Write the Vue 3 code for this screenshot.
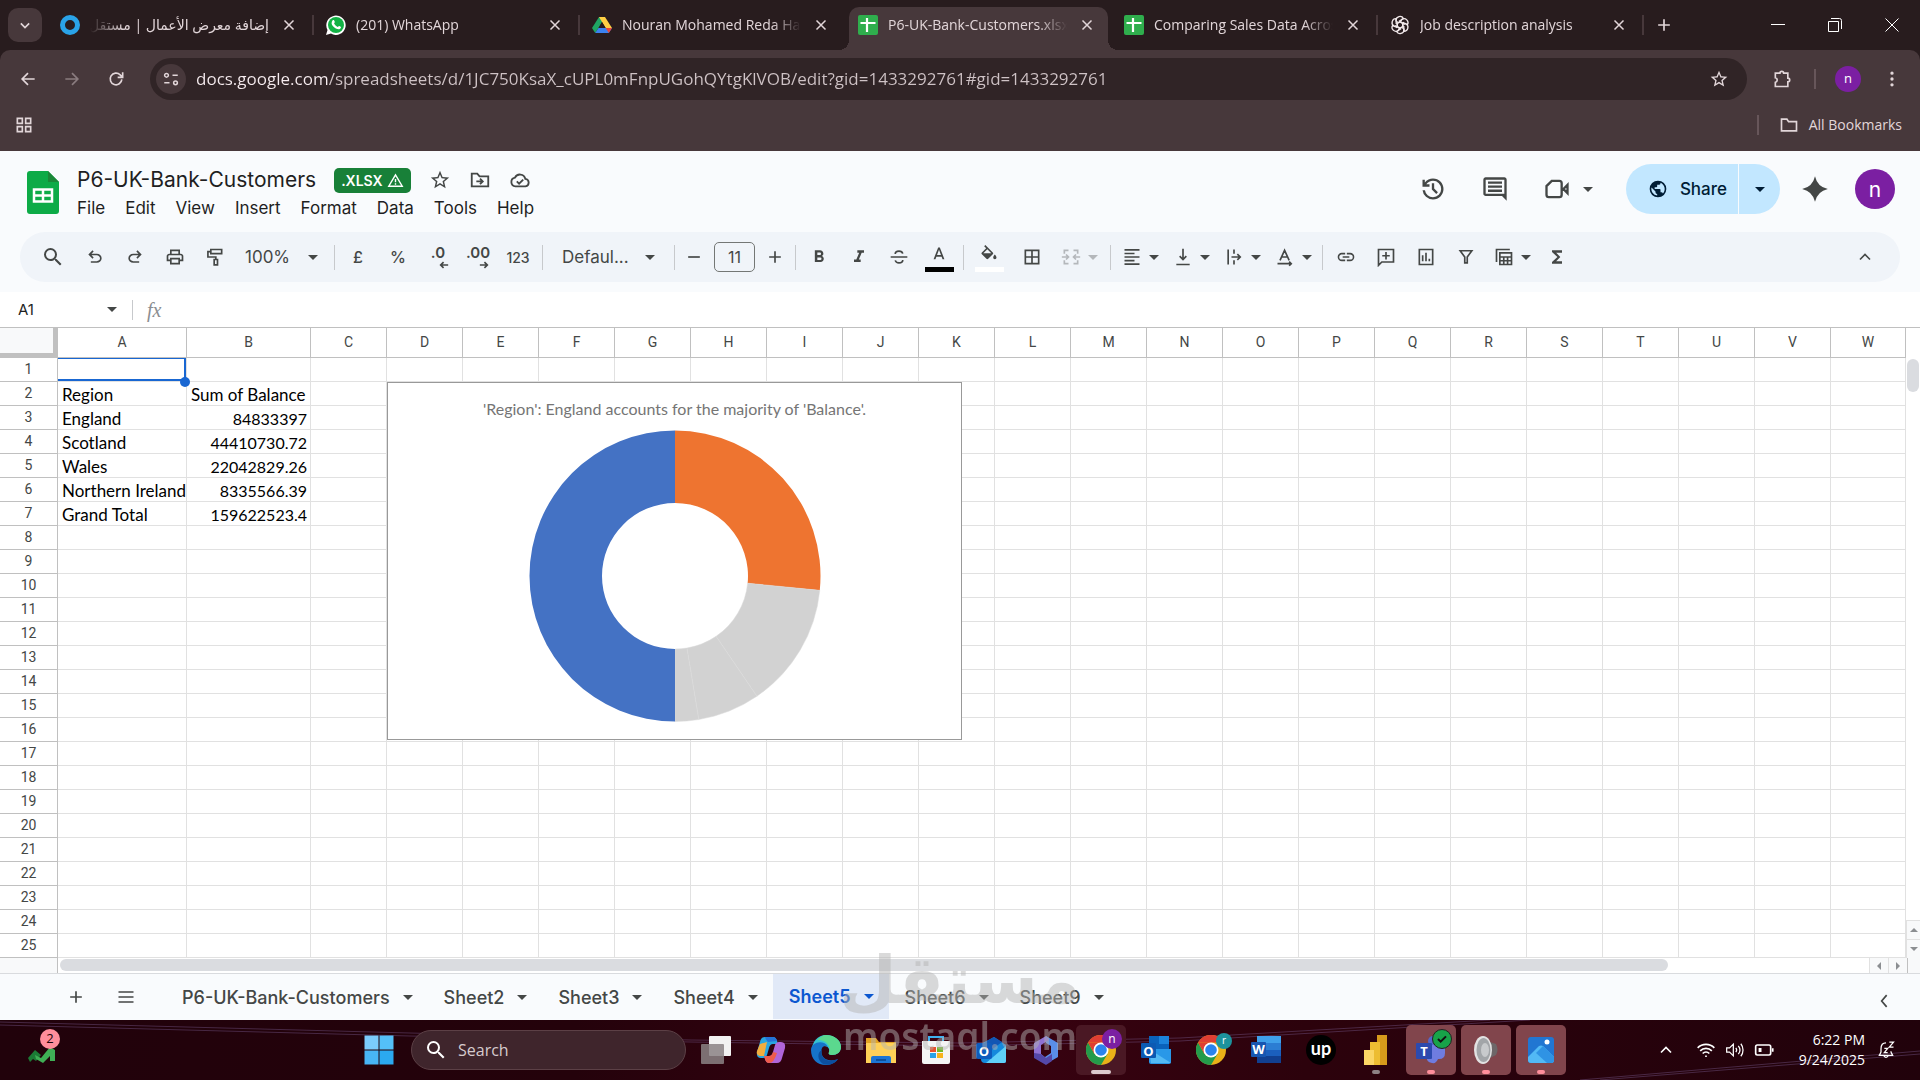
<script setup>
import { ref, computed, h } from 'vue'

// 24x24 icons: f = filled path, s = stroked path
const ICONS = {
  chevronDown: { s: 'M7 10l5 5 5-5' },
  chevronUp: { s: 'M6 15l6-6 6 6' },
  chevronLeft: { s: 'M14 5l-6 7 6 7' },
  close: { s: 'M6 6l12 12M18 6L6 18' },
  plus: { s: 'M12 5v14M5 12h14' },
  minus: { s: 'M5 12h14' },
  back: { s: 'M20 12H5M12 5l-7 7 7 7' },
  forward: { s: 'M4 12h15M12 5l7 7-7 7' },
  reload: { s: 'M19 12.500a7 7 0 1 1-2-5.500l2.500 2.500M20 4v6h-6' },
  tune: { s: 'M14 7h7M3 17h7M6 4.500a2.500 2.500 0 1 0 0 5a2.500 2.500 0 1 0 0-5M18 14.500a2.500 2.500 0 1 0 0 5a2.500 2.500 0 1 0 0-5' },
  star: { f: 'M22 9.240l-7.190-.62L12 2 9.190 8.630 2 9.240l5.460 4.730L5.820 21 12 17.270 18.180 21l-1.630-7.030zM12 15.400l-3.760 2.270 1-4.280-3.320-2.880 4.380-.38L12 6.100l1.710 4.040 4.380.38-3.320 2.880 1 4.280z' },
  extension: { s: 'M4 5h5.500a2 2 0 1 1 4.500 0h5v6a2 2 0 1 1 0 4.500V21H4v-5a2.800 2.800 0 0 0 0-5.500z' },
  dots: { f: 'M12 3a2 2 0 1 1 0 4 2 2 0 0 1 0-4zm0 7a2 2 0 1 1 0 4 2 2 0 0 1 0-4zm0 7a2 2 0 1 1 0 4 2 2 0 0 1 0-4z' },
  apps: { s: 'M4 4h6v6H4zM14 4h6v6h-6zM4 14h6v6H4zM14 14h6v6h-6z' },
  folder: { s: 'M3 5h6.500l2 3H21v11H3z' },
  folderMove: { s: 'M3 8V5h6l2.500 3H21v11H3zM8 13.500h7M12 10.500l3 3-3 3' },
  cloudDone: { s: 'M7 19a4.800 4.800 0 0 1-.5-9.500 6 6 0 0 1 11.300 1.200A4.200 4.200 0 0 1 18 19zM8.500 13.500l2.500 2.500 4.500-4.500' },
  warning: { s: 'M12 4L2.500 20h19zM12 10v4.500M12 16v2' },
  history: { f: 'M12 21q-3.450 0-6.010-2.290T3.050 13H5.100q.35 2.600 2.310 4.300T12 19q2.930 0 4.960-2.040T19 12t-2.040-4.960T12 5q-1.730 0-3.220.8T6.250 8H9v2H3V4h2v2.350q1.280-1.600 3.110-2.480T12 3q1.880 0 3.510.71t2.860 1.930 1.930 2.850T21 12t-.7 3.510-1.930 2.850-2.860 1.930T12 21zm2.800-4.800L11 12.400V7h2v4.600l3.200 3.200z' },
  chat: { f: 'M22 22l-4-4H4q-.83 0-1.410-.59T2 16V4q0-.83.59-1.410T4 2h16q.83 0 1.410.59T22 4zM4 4v12h16V4zm2 1.500h12v2H6zm0 3.500h12v2H6zm0 3.500h12v2H6z' },
  meet: { s: 'M7.500 5H14a2 2 0 0 1 2 2v10a2 2 0 0 1-2 2H5a2 2 0 0 1-2-2V9.500zM17.500 12l3.500-3.500v7z' },
  globe: { f: 'M12 2a10 10 0 1 0 0 20 10 10 0 0 0 0-20zm-1 17.930A8 8 0 0 1 4.210 10.210L9 15v1a2 2 0 0 0 2 2zm6.900-2.540A2 2 0 0 0 16 16h-1v-3a1 1 0 0 0-1-1H8v-2h2a1 1 0 0 0 1-1V7h2a2 2 0 0 0 2-2v-.41a8 8 0 0 1 2.900 12.800z' },
  spark: { f: 'M12 1Q14 10 23 12Q14 14 12 23Q10 14 1 12Q10 10 12 1z' },
  search: { f: 'M15.500 14h-.79l-.28-.27A6.470 6.470 0 0 0 16 9.500 6.500 6.500 0 1 0 9.500 16c1.610 0 3.090-.59 4.230-1.570l.27.28v.79l5 4.990L20.490 19zm-6 0a4.500 4.500 0 1 1 0-9 4.500 4.500 0 0 1 0 9z' },
  undo: { f: 'M7 19v-2h7.100q1.575 0 2.738-1T18 13.500 16.838 11 14.100 10H7.800l2.600 2.600L9 14 4 9l5-5 1.400 1.400L7.800 8h6.300q2.425 0 4.163 1.575T20 13.500t-1.737 3.925T14.100 19z' },
  print: { f: 'M19 8h-1V3H6v5H5c-1.660 0-3 1.340-3 3v6h4v4h12v-4h4v-6c0-1.660-1.340-3-3-3zM8 5h8v3H8zm8 14H8v-4h8zm2-4v-2H6v2H4v-4c0-.55.45-1 1-1h14c.55 0 1 .45 1 1v4z' },
  paint: { s: 'M7 3h13v5H7zM7 5.500H3.500V12H13v3M11 15h4v6.500h-4z' },
  bold: { f: 'M15.600 10.790c.97-.67 1.650-1.770 1.650-2.790 0-2.260-1.750-4-4-4H7v14h7.040c2.090 0 3.710-1.700 3.710-3.790 0-1.520-.86-2.820-2.150-3.420zM10 6.500h3a1.500 1.500 0 0 1 0 3h-3zm3.500 9H10v-3h3.500a1.500 1.500 0 0 1 0 3z' },
  italic: { f: 'M10 4v3h2.210l-3.420 8H6v3h8v-3h-2.210l3.420-8H18V4z' },
  strike: { s: 'M2 12h20M16.500 8c-.5-2-2.200-3-4.500-3-2.800 0-4.500 1.400-4.500 3.500M7.500 16c.5 2 2.200 3 4.500 3 2.800 0 4.500-1.400 4.500-3.500' },
  textA: { f: 'M11 3L5.500 17h2.250l1.120-3h6.250l1.120 3h2.250L13 3zm-1.380 9L12 5.670 14.380 12z' },
  bucket: { f: 'M16.560 8.940L7.620 0 6.210 1.410l2.380 2.380-5.150 5.150a1.490 1.490 0 0 0 0 2.120l5.500 5.500a1.490 1.490 0 0 0 2.120 0l5.500-5.500a1.500 1.500 0 0 0 0-2.120zM5.210 10L10 5.210 14.790 10zM19 11.500s-2 2.170-2 3.500a2 2 0 1 0 4 0c0-1.330-2-3.500-2-3.500z' },
  borders: { s: 'M4 4h16v16H4zM12 4v16M4 12h16' },
  merge: { s: 'M4 8V4h5M15 4h5v4M20 16v4h-5M9 20H4v-4M1 12h8M6 9l3 3-3 3M23 12h-8M18 9l-3 3 3 3' },
  align: { f: 'M3 2.500h18v2H3zm0 4.250h12v2H3zM3 11h18v2H3zm0 4.250h12v2H3zM3 19.500h18v2H3z' },
  valign: { s: 'M12 2v13M8 11l4 4 4-4M4 21h16' },
  wrap: { s: 'M5 3v18M12 3v5M12 16v5M9 12h10M16 8.500l3.500 3.500-3.500 3.500' },
  rotate: { s: 'M6 16L11.500 4 17 16M8 12h7M3 20h16M17 17.500l2.500 2.500-2.500 2.500' },
  link: { f: 'M3.900 12c0-1.710 1.390-3.100 3.100-3.100h4V7H7a5 5 0 0 0 0 10h4v-1.900H7A3.100 3.100 0 0 1 3.900 12zM8 13h8v-2H8zm9-6h-4v1.900h4a3.100 3.100 0 0 1 0 6.200h-4V17h4a5 5 0 0 0 0-10z' },
  addComment: { s: 'M3 22V3h18v15H7zM12 6v9M7.500 10.500h9' },
  chart: { s: 'M4 3h16v18H4zM8 10v7M12 7v10M16 14v3' },
  filter: { s: 'M5 4.500h14l-5.500 7.500v7h-3v-7z' },
  tableView: { s: 'M3 18V3h16M7 7h14v14H7zM7 12h14M7 16.500h14M11.700 12v9M16.300 12v9' },
  sigma: { f: 'M18 4H6v2l6.500 6L6 18v2h12v-3h-7l5-5-5-5h7z' },
  menu: { s: 'M3 6h18M3 12h18M3 18h18' },
  arrowL: { s: 'M22 12H4M11 5l-7 7 7 7', w: 4 },
  arrowR: { s: 'M2 12h18M13 5l7 7-7 7', w: 4 },
  wifi: { s: 'M2 9.500a14 14 0 0 1 20 0M5 13a10 10 0 0 1 14 0M8 16.200a5.700 5.700 0 0 1 8 0M11 19.500h2' },
  sound: { s: 'M2 9.500h3.500L10 5v14l-4.500-4.500H2zM13 9.500a4 4 0 0 1 0 5M16 7a8 8 0 0 1 0 10M19 4.500a12 12 0 0 1 0 15', w: 1.5 },
  battery: { s: 'M4 6h14q2 0 2 2v8q0 2-2 2H4q-2 0-2-2V8q0-2 2-2zM22.500 10v4M8 9.500v5M6.500 9.500v5' },
  bell: { s: 'M12 3.500q-6 0-6 7v4l-2 4h16l-2-4v-1M9.500 19q2.500 3.500 5 0M16 2.500h5l-5 6h5M10 10h4l-4 5h4', w: 1.5 }
}

const Ico = ({ n }) => {
  const { f, s, w = 2 } = ICONS[n]
  return h('svg', { class: 'ico', viewBox: '0 0 24 24', 'aria-hidden': 'true' }, [
    h('path', f
      ? { d: f, fill: 'currentColor', 'fill-rule': 'evenodd' }
      : { d: s, fill: 'none', stroke: 'currentColor', 'stroke-width': w })
  ])
}
Ico.props = ['n']

const browserTabs = [
  { title: 'إضافة معرض الأعمال | مستقل', icon: 'ring', rtl: true },
  { title: '(201) WhatsApp', icon: 'whatsapp' },
  { title: 'Nouran Mohamed Reda Hassan', icon: 'drive' },
  { title: 'P6-UK-Bank-Customers.xlsx', icon: 'sheet', active: true },
  { title: 'Comparing Sales Data Across', icon: 'sheet' },
  { title: 'Job description analysis', icon: 'gpt' }
]
const url = ref('docs.google.com/spreadsheets/d/1JC750KsaX_cUPL0mFnpUGohQYtgKlVOB/edit?gid=1433292761#gid=1433292761')
const menus = ['File', 'Edit', 'View', 'Insert', 'Format', 'Data', 'Tools', 'Help']

const columns = 'ABCDEFGHIJKLMNOPQRSTUVW'.split('')
const ROWS = 25
const cells = {
  2: ['Region', 'Sum of Balance'],
  3: ['England', '84833397'],
  4: ['Scotland', '44410730.72'],
  5: ['Wales', '22042829.26'],
  6: ['Northern Ireland', '8335566.39'],
  7: ['Grand Total', '159622523.4']
}
const isNumber = v => v !== undefined && !isNaN(v)

const sheets = ['P6-UK-Bank-Customers', 'Sheet2', 'Sheet3', 'Sheet4', 'Sheet5', 'Sheet6', 'Sheet9']
const activeSheet = ref('Sheet5')

// the pivot's grand total is part of the plotted range
const COLORS = ['#ee7430', '#d2d2d2', '#d2d2d2', '#d2d2d2', '#4472c4']
const R = 145.5
const r = 73
const slices = computed(() => {
  const values = [3, 4, 5, 6, 7].map(row => Number(cells[row][1]))
  const total = values.reduce((s, v) => s + v, 0)
  let a = 0
  return values.map((v, i) => {
    const b = a + (v / total) * Math.PI * 2
    const p = (rad, t) => `${(rad * Math.sin(t)).toFixed(2)} ${(-rad * Math.cos(t)).toFixed(2)}`
    const big = b - a > Math.PI ? 1 : 0
    const d = `M${p(R, a)}A${R} ${R} 0 ${big} 1 ${p(R, b)}L${p(r, b)}A${r} ${r} 0 ${big} 0 ${p(r, a)}Z`
    a = b
    return { d, color: COLORS[i] }
  })
})
</script>

<template>
  <div class="app">
    <header class="chrome">
      <div class="tabstrip">
        <button class="tab-search" aria-label="Search tabs"><Ico n="chevronDown" /></button>
        <div v-for="t in browserTabs" :key="t.title" class="tab" :class="{ active: t.active }">
          <svg v-if="t.icon === 'ring'" class="fav" viewBox="0 0 20 20"><circle cx="10" cy="10" r="7.500" fill="none" stroke="#2aa3e8" stroke-width="5" /></svg>
          <svg v-else-if="t.icon === 'whatsapp'" class="fav" viewBox="0 0 20 20">
            <path d="M0 20l1.500-5A9.700 9.700 0 1 1 5 18.600z" fill="#fff" />
            <circle cx="10" cy="10" r="8" fill="#12b245" />
            <path d="M6.500 5.500c1-1 1.700-.5 2.300 1.500 0 .8-.8 1-.7 1.500.8 1.500 2 2.700 3.500 3.400.6 0 1-1.200 1.700-1 1.700.8 2 1 1.500 2-1 1.600-2.700 1.600-5 .5C7.300 12 5.800 10 5.600 8.500c0-1.300.3-2.300.9-3z" fill="#fff" />
          </svg>
          <svg v-else-if="t.icon === 'drive'" class="fav" viewBox="0 0 20 20">
            <path d="M7 2h6l-6.500 11-3.300 5L0 13z" fill="#1fa463" /><path d="M7 2h6l7 11h-6.300z" fill="#ffcf44" />
            <path d="M6.500 13H20l-3.200 5H3.200z" fill="#3b82f0" /><path d="M13.700 13H20l-3.200 5z" fill="#e8453c" /><path d="M10 7l3.500 6h-7z" fill="#281c1e" />
          </svg>
          <svg v-else-if="t.icon === 'sheet'" class="fav" viewBox="0 0 20 20"><rect width="20" height="20" rx="2" fill="#2fae4d" /><path d="M9 3v14M2.500 8h15" stroke="#fff" stroke-width="2.200" /></svg>
          <svg v-else class="fav" viewBox="0 0 20 20">
            <g fill="none" stroke="#f3eaec" stroke-width="1.300">
              <path v-for="k in 6" :key="k" :transform="`rotate(${k * 60} 10 10)`" d="M10 7l3 1.700v5.300M6 6.500V5.500a4 4 0 0 1 7.500-2L9 6.200" />
            </g>
          </svg>
          <span class="tab-title" :class="{ rtl: t.rtl }">{{ t.title }}</span>
          <button class="tab-close" aria-label="Close tab"><Ico n="close" /></button>
        </div>
        <button class="new-tab" aria-label="New tab"><Ico n="plus" /></button>
        <div class="win-buttons">
          <button aria-label="Minimize"><svg viewBox="0 0 14 14"><path d="M0 6.500h14" /></svg></button>
          <button aria-label="Restore"><svg viewBox="0 0 14 14"><path d="M.5 3.500h10v10H.5zM3 .5h8.500a2 2 0 0 1 2 2V11" /></svg></button>
          <button aria-label="Close"><svg viewBox="0 0 14 14"><path d="M.5.5l13 13M13.500.5l-13 13" /></svg></button>
        </div>
      </div>
      <div class="nav">
        <button aria-label="Back"><Ico n="back" /></button>
        <button class="dim" aria-label="Forward"><Ico n="forward" /></button>
        <button aria-label="Reload"><Ico n="reload" /></button>
        <div class="omnibox">
          <button class="site" aria-label="Site information"><Ico n="tune" /></button>
          <input v-model="url" aria-label="Address" spellcheck="false">
          <button class="mark" aria-label="Bookmark this tab"><Ico n="star" /></button>
        </div>
        <button aria-label="Extensions"><Ico n="extension" /></button>
        <i class="rule" />
        <button aria-label="Profile"><span class="mini-avatar">n</span></button>
        <button aria-label="Menu"><Ico n="dots" /></button>
      </div>
      <div class="bookmarks">
        <button aria-label="Apps"><Ico n="apps" /></button>
        <i class="rule" />
        <button class="all"><Ico n="folder" />All Bookmarks</button>
      </div>
    </header>

    <section class="doc-head">
      <svg class="logo" viewBox="0 0 32 43">
        <path d="M3 0h18l11 11v29a3 3 0 0 1-3 3H3a3 3 0 0 1-3-3V3a3 3 0 0 1 3-3z" fill="#0dab47" /><path d="M21 0l11 11H21z" fill="#1b8738" />
        <path d="M7 18.500h18v12H7zM16 18.500v12M7 24.500h18" fill="none" stroke="#fff" stroke-width="2.500" />
      </svg>
      <div class="doc-main">
        <div class="title-row">
          <h1>P6-UK-Bank-Customers</h1>
          <span class="xlsx">.XLSX <Ico n="warning" /></span>
          <button aria-label="Star"><Ico n="star" /></button>
          <button aria-label="Move"><Ico n="folderMove" /></button>
          <button aria-label="Document status"><Ico n="cloudDone" /></button>
        </div>
        <nav class="menus"><button v-for="m in menus" :key="m">{{ m }}</button></nav>
      </div>
      <div class="doc-actions">
        <button aria-label="Version history"><Ico n="history" /></button>
        <button aria-label="Comments"><Ico n="chat" /></button>
        <button class="meet" aria-label="Join a call"><Ico n="meet" /><i class="caret" /></button>
        <div class="share">
          <button class="share-main"><Ico n="globe" />Share</button>
          <button class="share-more" aria-label="Share options"><i class="caret" /></button>
        </div>
        <button class="spark" aria-label="Ask Gemini"><Ico n="spark" /></button>
        <button class="avatar" aria-label="Account">n</button>
      </div>
    </section>

    <div class="toolbar-wrap">
      <div class="toolbar">
        <button class="find" aria-label="Search the menus"><Ico n="search" /></button>
        <button aria-label="Undo"><Ico n="undo" /></button>
        <button class="flip" aria-label="Redo"><Ico n="undo" /></button>
        <button aria-label="Print"><Ico n="print" /></button>
        <button aria-label="Paint format"><Ico n="paint" /></button>
        <div class="pick zoom"><select aria-label="Zoom"><option>100%</option></select><i class="caret" /></div>
        <i class="sep" />
        <button class="txt">£</button>
        <button class="txt">%</button>
        <button class="txt dec">.0<Ico n="arrowL" /></button>
        <button class="txt dec">.00<Ico n="arrowR" /></button>
        <button class="txt small">123</button>
        <i class="sep" />
        <div class="pick font"><select aria-label="Font"><option>Defaul...</option></select><i class="caret" /></div>
        <i class="sep" />
        <button class="step" aria-label="Decrease font size"><Ico n="minus" /></button>
        <input class="size" value="11" aria-label="Font size">
        <button class="step" aria-label="Increase font size"><Ico n="plus" /></button>
        <i class="sep" />
        <button aria-label="Bold"><Ico n="bold" /></button>
        <button aria-label="Italic"><Ico n="italic" /></button>
        <button aria-label="Strikethrough"><Ico n="strike" /></button>
        <button class="ink" aria-label="Text colour"><Ico n="textA" /></button>
        <i class="sep" />
        <button class="wide ink white" aria-label="Fill colour"><Ico n="bucket" /></button>
        <button class="border-btn" aria-label="Borders"><Ico n="borders" /></button>
        <button class="split off" aria-label="Merge cells"><Ico n="merge" /><i class="caret" /></button>
        <i class="sep" />
        <button class="split" aria-label="Horizontal align"><Ico n="align" /><i class="caret" /></button>
        <button class="split" aria-label="Vertical align"><Ico n="valign" /><i class="caret" /></button>
        <button class="split" aria-label="Text wrapping"><Ico n="wrap" /><i class="caret" /></button>
        <button class="split" aria-label="Text rotation"><Ico n="rotate" /><i class="caret" /></button>
        <i class="sep" />
        <button aria-label="Insert link"><Ico n="link" /></button>
        <button aria-label="Insert comment"><Ico n="addComment" /></button>
        <button aria-label="Insert chart"><Ico n="chart" /></button>
        <button aria-label="Create a filter"><Ico n="filter" /></button>
        <button class="split" aria-label="Filter views"><Ico n="tableView" /><i class="caret" /></button>
        <button aria-label="Functions"><Ico n="sigma" /></button>
        <button class="hide" aria-label="Hide the menus"><Ico n="chevronUp" /></button>
      </div>
    </div>

    <div class="formula">
      <input class="name-box" value="A1" aria-label="Name box"><i class="caret" />
      <span class="fx">fx</span>
      <input class="fx-input" aria-label="Formula">
    </div>

    <main class="grid-area">
      <div class="grid">
        <table>
          <colgroup><col class="c-head"><col class="c-a"><col class="c-b"><col v-for="c in columns.slice(2)" :key="c"></colgroup>
          <thead>
            <tr><th class="corner" /><th v-for="c in columns" :key="c" scope="col">{{ c }}</th></tr>
          </thead>
          <tbody>
            <tr v-for="n in ROWS" :key="n">
              <th scope="row">{{ n }}</th>
              <td v-for="(c, i) in columns" :key="c" :class="{ num: isNumber(cells[n]?.[i]), sel: n === 1 && i === 0 }">{{ cells[n]?.[i] }}</td>
            </tr>
          </tbody>
        </table>
        <figure class="chart">
          <figcaption>'Region': England accounts for the majority of 'Balance'.</figcaption>
          <svg viewBox="-146 -146 292 292">
            <path v-for="(s, i) in slices" :key="i" :d="s.d" :fill="s.color" :stroke="i > 0 && i < 4 ? '#dadada' : 'none'" stroke-width="0.5" />
          </svg>
        </figure>
      </div>
      <div class="vscroll">
        <div class="vthumb" />
        <button aria-label="Scroll up"><i class="tri up" /></button>
        <button aria-label="Scroll down"><i class="tri down" /></button>
      </div>
    </main>
    <div class="hscroll">
      <div class="hpad" />
      <div class="htrack"><div class="hthumb" /></div>
      <button aria-label="Scroll left"><i class="tri left" /></button>
      <button aria-label="Scroll right"><i class="tri right" /></button>
      <div class="hend" />
    </div>

    <footer class="sheets">
      <button class="sheet-btn" aria-label="Add sheet"><Ico n="plus" /></button>
      <button class="sheet-btn" aria-label="All sheets"><Ico n="menu" /></button>
      <div class="sheet-list">
        <button v-for="s in sheets" :key="s" class="sheet" :class="{ on: s === activeSheet }" @click="activeSheet = s">{{ s }}<i class="caret" /></button>
      </div>
      <button class="side" aria-label="Show side panel"><Ico n="chevronLeft" /></button>
    </footer>

    <footer class="taskbar">
      <svg class="streaks" viewBox="0 0 1920 60" preserveAspectRatio="none">
        <path d="M0 2L410 13 690 20 960 23 1180 18 1490 0M0 5L410 16 690 22 960 26 1180 21 1530 0M1580 60L1920 31M1600 60L1920 34" />
      </svg>
      <div class="tb-left">
        <button class="widget" aria-label="Widgets">
          <svg viewBox="0 0 28 16"><path d="M0 11l7-8 6 5-5 6-3-2-3 3z" fill="#1b7a35" /><path d="M7 8l6 3 9-11 5 3v11h-5V9l-7 7-7-4z" fill="#3fae55" /></svg>
          <span>2</span>
        </button>
      </div>
      <div class="tb-center">
        <button class="app-btn" aria-label="Start">
          <svg viewBox="0 0 30 30"><path d="M.5.5h14v14H.5z" fill="#7bcbfb" /><path d="M15.500.5h14v14h-14z" fill="#54c0f8" /><path d="M.5 15.500h14v14H.5z" fill="#48b5f5" /><path d="M15.500 15.500h14v14h-14z" fill="#2ba9f0" /></svg>
        </button>
        <label class="tb-search"><Ico n="search" /><input placeholder="Search" aria-label="Search"></label>
        <button class="app-btn" aria-label="Task view">
          <svg viewBox="0 0 30 30"><rect x="8" y="1" width="22" height="20" rx="1" fill="#f2f2f2" /><rect y="9" width="23" height="20" rx="1" fill="#8b8385" opacity=".85" /></svg>
        </button>
        <button class="app-btn" aria-label="Copilot">
          <svg viewBox="0 0 30 30"><path d="M9 2h8q3 0 4 4l1 3h-5q-3 0-4 4l-2 7q-1 3-4 3H5q-5 0-4-6L4 7q1-5 5-5z" fill="#28a6e0" /><path d="M4 9l7-2-3 14H4q-4-1-3-5z" fill="#f3ad3d" /><path d="M21 28h-8q-3 0-4-4l-1-3h5q3 0 4-4l2-7q1-3 4-3h2q5 0 4 6l-3 10q-1 5-5 5z" fill="#b065d9" /><path d="M8 21h5q3 0 4-4l4 1q-3 10-8 10-3 0-4-4z" fill="#ef5c4b" /><path d="M9 2h8q3 0 4 4l-9 1q-3-3-3-5z" fill="#2473d8" /></svg>
        </button>
        <button class="app-btn" aria-label="Edge">
          <svg viewBox="0 0 30 30"><path d="M1 17C0 7 7 0 15 0c9 0 15 6 15 12 0 5-4 8-9 8-3 0-4-1-3-3 1-3-1-6-5-6-6 0-8 4-8 9z" fill="#35c1d1" /><path d="M15 0c9 0 15 6 15 12 0 5-4 8-9 8-3 0-4-1-3-3 3-7-5-13-12-12 3-3 6-5 9-5z" fill="#5bd88e" /><path d="M0 15c0-8 13-11 17-3-5-3-8 2-6 8 2 5 9 7 16 4-3 4-8 6-12 6C6 30 0 24 0 15z" fill="#1673c9" /><path d="M11 15c-2 8 5 13 16 9-3 5-10 7-15 5-6-4-6-12-1-14z" fill="#0c4f9f" /></svg>
        </button>
        <button class="app-btn" aria-label="File Explorer">
          <svg viewBox="0 0 30 30"><path d="M0 3h10l3 4h17v8H0z" fill="#e3a424" /><path d="M0 8h30v20H0z" fill="#ffd057" /><path d="M5 28v-5q0-2 2-2h16q2 0 2 2v5z" fill="#1c75d4" /><path d="M10 24h10v2H10z" fill="#0d509c" /></svg>
        </button>
        <button class="app-btn" aria-label="Store">
          <svg viewBox="0 0 30 30"><path d="M8 7V2h14v5" fill="none" stroke="#3fb1ee" stroke-width="2" /><path d="M1 6h28v21q0 2-2 2H3q-2 0-2-2z" fill="#f4f4f4" /><path d="M9 12h6v5H9z" fill="#e8502d" /><path d="M16 12h6v5h-6z" fill="#74b928" /><path d="M9 18h6v5H9z" fill="#28a1e8" /><path d="M16 18h6v5h-6z" fill="#f7b31b" /></svg>
        </button>
        <button class="app-btn" aria-label="Outlook">
          <svg viewBox="0 0 30 30"><path d="M5 9L18 2l12 8v16q0 2-2 2H9q-4 0-4-4z" fill="#1489dc" /><path d="M9 7l9-5 8 5-12 9z" fill="#1256b4" /><path d="M30 11v15q0 2-2 2H10z" fill="#5fd0f8" /><rect y="8" width="16" height="16" rx="2" fill="#0f5cbd" /><text x="8" y="21" class="g">O</text></svg>
        </button>
        <button class="app-btn" aria-label="Microsoft 365">
          <svg viewBox="0 0 30 30"><path d="M15 1l12 7v14l-12 7-4-5 9-6v-7l-5-3z" fill="#5a8ee8" /><path d="M15 1L3 8v14l8 5 4-4-5-4V10l8-5z" fill="#8f72d2" /><path d="M3 18l7 1 5 4 6-4v7l-6 4L3 23z" fill="#5448a8" /></svg>
        </button>
        <button class="app-btn tile faint" aria-label="Chrome">
          <svg viewBox="0 0 30 30"><circle cx="15" cy="15" r="15" fill="#eab118" /><path d="M2 7.500A15 15 0 0 1 28 7.500H15z" fill="#df3e33" /><path d="M2 7.500A15 15 0 0 0 15 30l6.500-11-13 0z" fill="#249b4b" /><path d="M2 7.500L8.500 19 15 7.500z" fill="#df3e33" /><circle cx="15" cy="15" r="7.500" fill="#fff" /><circle cx="15" cy="15" r="5.800" fill="#2b83ed" /></svg>
          <span class="badge purple">n</span><i class="run long" />
        </button>
        <button class="app-btn" aria-label="Outlook classic">
          <svg viewBox="0 0 30 30"><path d="M8 1h20v14H8z" fill="#0a62bb" /><path d="M18 1h10v8H18z" fill="#1c84dc" /><path d="M8 14h22v13q0 2-2 2H10q-2 0-2-2z" fill="#2998e8" /><path d="M8 14l22 14H10z" fill="#54baf4" /><rect y="8" width="15" height="15" rx="1" fill="#0c5ab3" /><text x="7.500" y="20.500" class="g">O</text></svg>
        </button>
        <button class="app-btn" aria-label="Chrome, second profile">
          <svg viewBox="0 0 30 30"><circle cx="15" cy="15" r="15" fill="#eab118" /><path d="M2 7.500A15 15 0 0 1 28 7.500H15z" fill="#df3e33" /><path d="M2 7.500A15 15 0 0 0 15 30l6.500-11-13 0z" fill="#249b4b" /><path d="M2 7.500L8.500 19 15 7.500z" fill="#df3e33" /><circle cx="15" cy="15" r="7.500" fill="#fff" /><circle cx="15" cy="15" r="5.800" fill="#2b83ed" /></svg>
          <span class="badge teal">r</span>
        </button>
        <button class="app-btn" aria-label="Word">
          <svg viewBox="0 0 30 30"><path d="M6 1h24v8H6z" fill="#3fa0ea" /><path d="M6 8h24v7H6z" fill="#2b7dd3" /><path d="M6 15h24v7H6z" fill="#1b5fbd" /><path d="M6 21h24v7H6z" fill="#113f90" /><rect y="7" width="15" height="15" rx="1" fill="#1756b1" /><text x="7.500" y="19" class="g">W</text></svg>
        </button>
        <button class="app-btn" aria-label="Upwork"><span class="upwork">up</span></button>
        <button class="app-btn" aria-label="Power BI">
          <svg viewBox="0 0 30 30"><path d="M16 0h10v30H16z" fill="#d69a1b" /><path d="M9 7h10v23H9z" fill="#edbd32" /><path d="M3 15h10v15H3z" fill="#fbd665" /></svg>
          <i class="run grey" />
        </button>
        <button class="app-btn tile" aria-label="Teams">
          <svg viewBox="0 0 30 30"><circle cx="17" cy="6" r="5" fill="#5566c9" /><path d="M10 10h19v8q0 6-6 6h-1q-2 5-6 4-6-1-6-8z" fill="#6f7ce0" /><rect y="8" width="16" height="16" rx="1" fill="#2c4aae" /><text x="8" y="20.500" class="g">T</text></svg>
          <span class="badge ok"><svg viewBox="0 0 24 24"><path d="M6 12l4 4 8-8" fill="none" stroke="#111" stroke-width="3" /></svg></span><i class="run" />
        </button>
        <button class="app-btn tile" aria-label="Volume">
          <svg viewBox="0 0 30 30"><path d="M12 1l7 6 6 2q3 6 0 11l-6 3-7 6z" fill="#6d6668" /><ellipse cx="12" cy="15" rx="9" ry="14" fill="#e2e2e2" /><ellipse cx="12.500" cy="15" rx="7" ry="12" fill="#a2a5a8" /><ellipse cx="14" cy="15" rx="4" ry="7" fill="#c8cacc" /></svg>
          <i class="run" />
        </button>
        <button class="app-btn tile" aria-label="Photos">
          <svg viewBox="0 0 30 30"><rect x="2" y="2" width="26" height="26" rx="3" fill="#2176d2" /><path d="M2 22L13 11q2-1 4 0l11 11v3q0 3-3 3H5q-3 0-3-3z" fill="#52b9f5" /><path d="M17 11l11 11v3q0 3-3 3h-4L10 18z" fill="#2f93e4" /><circle cx="21" cy="7" r="2.500" fill="#fff" /></svg>
          <i class="run" />
        </button>
      </div>
      <div class="tb-right">
        <button aria-label="Hidden icons"><Ico n="chevronUp" /></button>
        <button class="quick" aria-label="Quick settings"><Ico n="wifi" /><Ico n="sound" /><Ico n="battery" /></button>
        <button class="clock"><span>6:22 PM</span><span>9/24/2025</span></button>
        <button aria-label="Notifications"><Ico n="bell" /></button>
      </div>
    </footer>

    <div class="watermark" aria-hidden="true"><b>مستقل</b><span>mostaql.com</span></div>
  </div>
</template>

<style>
body { margin: 0 }
</style>

<style scoped>
* { box-sizing: border-box }
.app {
  position: relative; min-height: 100vh; display: flex; flex-direction: column;
  overflow: hidden; background: #fff; font-family: Inter, sans-serif; color: #1f1f1f;
}
button, input, select { font: inherit; color: inherit; border: 0; background: none; padding: 0; margin: 0; outline: 0 }
button { display: flex; align-items: center; justify-content: center; flex: none }
.ico { width: 20px; height: 20px; flex: none; display: block }
.caret { width: 0; height: 0; flex: none; border: 5px solid transparent; border-top-color: currentColor; border-bottom: 0 }

/* browser */
.chrome { background: #281c1e; color: #e2d6d9; font-family: "Open Sans", "DejaVu Sans", sans-serif }
.tabstrip { display: flex; align-items: center; height: 50px; font-size: 14px }
.tab-search { width: 34px; height: 34px; margin: 0 6px 0 8px; border-radius: 10px; background: #47383b }
.tab { position: relative; flex: 0 1 266px; min-width: 0; height: 50px; display: flex; align-items: center; gap: 10px; padding: 0 15px 0 12px }
.tab > * { position: relative }
.tab::after { content: ""; position: absolute; right: 0; top: 15px; width: 2px; height: 20px; background: #47383b }
.tab:has(+ .active)::after { display: none }
.tab.active::before { content: ""; position: absolute; inset: 7px 4px 0 3px; background: #47383b; border-radius: 10px 10px 0 0 }
.tab.active::after {
  left: -7px; right: -6px; top: 40px; width: auto; height: 10px;
  background:
    radial-gradient(circle at 0 0, transparent 10px, #47383b 10px) left / 10px 10px no-repeat,
    radial-gradient(circle at 100% 0, transparent 10px, #47383b 10px) right / 10px 10px no-repeat;
}
.fav { width: 20px; height: 20px; flex: none }
.tab-title { flex: 1; min-width: 0; overflow: hidden; white-space: nowrap; line-height: 22px; mask-image: linear-gradient(90deg, #000 150px, transparent) }
.tab-title.rtl { direction: rtl; mask-image: linear-gradient(270deg, #000 145px, transparent) }
.tab-close { width: 20px; height: 20px }
.tab-close .ico { width: 18px; height: 18px }
.new-tab { width: 40px; height: 34px }
.win-buttons { margin-left: auto; display: flex }
.win-buttons button { width: 57px; height: 50px }
.win-buttons svg { width: 14px; height: 14px; fill: none; stroke: #fff; stroke-width: 1 }
.nav { display: flex; align-items: center; padding: 8px 6px 0; background: #47383b; border-radius: 10px 10px 0 0 }
.nav > button { width: 44px; height: 42px }
.dim { color: #8a7c7f }
.omnibox { flex: 1; min-width: 0; height: 42px; display: flex; align-items: center; margin: 0 13px 0 12px; padding: 0 18px 0 6px; border-radius: 21px; background: #302426 }
.omnibox input {
  flex: 1; min-width: 0; margin-left: 10px; font-size: 17px; line-height: 24px;
  background: linear-gradient(90deg, #f7edf0 132px, #cfc3c6 132px); background-clip: text; -webkit-text-fill-color: transparent;
}
.site { width: 30px; height: 30px; border-radius: 50%; background: #47383b }
.site .ico { width: 18px; height: 18px }
.rule { width: 2px; height: 20px; background: #67565a }
.nav .rule { margin: 0 10px }
.mini-avatar { width: 26px; height: 26px; border-radius: 50%; background: #7b1fa2; color: #fff; font-size: 13px; line-height: 25px }
.bookmarks { display: flex; align-items: center; gap: 20px; height: 51px; padding: 0 18px 2px 14px; background: #47383b; font-size: 14px }
.bookmarks .rule { margin-left: auto }
.all { gap: 10px }

/* document header */
.doc-head { display: flex; align-items: flex-start; height: 81px; padding: 0 25px 0 27px; background: #f9fbfd }
.logo { width: 32px; height: 43px; margin: 20px 18px 0 0 }
.title-row { display: flex; align-items: center; height: 30px; margin-top: 14px }
h1 { margin: 0 18px 0 0; font-size: 21px; line-height: 30px; font-weight: 400; color: #1f1f1f }
.xlsx { display: flex; align-items: center; gap: 4px; height: 25px; padding: 0 7px; margin-right: 9px; border-radius: 5px; background: #188038; color: #fff; font-size: 14px; font-weight: 600 }
.xlsx .ico { width: 17px; height: 17px }
.title-row button { width: 40px; height: 30px; color: #444746 }
.title-row button .ico { width: 22px; height: 22px }
.menus { display: flex; gap: 20px; font-size: 17px; line-height: 24px; margin-top: 1px }
.doc-actions { margin-left: auto; display: flex; align-items: center; padding-top: 13px; height: 63px; color: #444746 }
.doc-actions > button { width: 62px; height: 50px }
.doc-actions .ico { width: 28px; height: 28px }
.doc-actions .meet { width: 85px; gap: 12px }
.share { display: flex; gap: 1px; color: #001d35; font-weight: 500; font-size: 17px; margin-left: 15px }
.share-main { height: 50px; padding: 0 11px 0 22px; gap: 12px; border-radius: 25px 0 0 25px; background: #c2e7ff }
.share-main .ico { width: 20px; height: 20px }
.share-more { width: 41px; height: 50px; border-radius: 0 25px 25px 0; background: #c2e7ff }
.doc-actions .spark { width: 70px }
.doc-actions .avatar { width: 40px; height: 40px; margin-left: 5px; border-radius: 50%; background: #7b1fa2; color: #fff; font-size: 21px }

/* toolbar */
.toolbar-wrap { padding: 0 20px 10px; background: #f9fbfd }
.toolbar { display: flex; align-items: center; height: 50px; padding: 0 15px 0 10px; border-radius: 25px; background: #f0f4f9; color: #444746 }
.toolbar button { width: 40px; height: 38px; color: inherit }
.toolbar .find { width: 45px }
.toolbar .find .ico { width: 24px; height: 24px }
.flip .ico { transform: scaleX(-1) }
.sep { width: 1px; height: 25px; margin: 0 3px 0 4px; background: #c7c9cc; flex: none }
.pick { display: flex; align-items: center; justify-content: space-between; font-size: 17px }
.pick select { appearance: none; line-height: 24px }
.zoom { width: 95px; padding: 0 12px 0 10px }
.font { width: 124px; padding: 0 15px 0 16px }
.toolbar .txt { font-size: 16px; font-weight: 500 }
.toolbar .small { font-size: 14px }
.toolbar .dec { display: flex; flex-direction: column; line-height: 15px; font-weight: 600; font-size: 15px }
.dec .ico { width: 12px; height: 10px; align-self: flex-end; margin-right: 8px }
.toolbar .step { width: 32px }
.size { width: 41px; height: 30px; margin: 0 4px; border: 1px solid #747775; border-radius: 5px; text-align: center; font-size: 16px }
.toolbar .ink { flex-direction: column; gap: 2px; padding-top: 2px }
.ink::after { content: ""; width: 29px; height: 5px; background: #000 }
.white::after { background: #fff }
.toolbar .wide { width: 44px }
.toolbar .border-btn { width: 42px }
.toolbar .split { width: 51px; justify-content: flex-start; padding-left: 8px; gap: 7px }
.toolbar .off { color: #b4b7bb; width: 53px }
.toolbar .hide { margin-left: auto }

/* formula bar */
.formula { display: flex; align-items: center; height: 36px; padding-left: 18px; border-bottom: 1px solid #c0c0c0; color: #444746 }
.name-box { width: 89px; font-size: 15px; color: #1f1f1f }
.fx { margin-left: 15px; padding-left: 14px; border-left: 1px solid #c7c9cc; font: italic 20px/20px "Liberation Serif", serif; color: #8b8e91 }
.fx-input { flex: 1; margin-left: 12px }

/* grid */
.grid-area { display: flex; flex: 1 }
.grid { position: relative; flex: 1; min-width: 0; overflow: hidden }
table { width: 1906px; table-layout: fixed; border-collapse: separate; border-spacing: 0 }
col { width: 76px }
.c-head { width: 58px }
.c-a { width: 129px }
.c-b { width: 124px }
col:last-child { width: 75px }
th { padding: 0 0 2px; border: solid #c0c0c0; border-width: 0 1px 1px 0; font: 400 14px/20px Roboto, sans-serif; color: #444746; background: #fff; text-align: center }
thead th { height: 30px }
.corner { background: #f8f9fa; border: solid #c0c0c0; border-width: 0 5px 5px 0 }
tbody th, td { height: 24px }
td { position: relative; padding: 3px 3px 0 4px; border: solid #e1e1e1; border-width: 0 1px 1px 0; font: 17px/20px Lato, sans-serif; color: #000; white-space: nowrap }
.num { text-align: right; font-size: 16px }
.sel::before { content: ""; position: absolute; inset: 0; border: solid #1967d2; border-width: 1px 2px 2px 0 }
.sel::after { content: ""; position: absolute; right: -4px; bottom: -6px; width: 10px; height: 10px; border-radius: 50%; background: #1967d2; z-index: 1 }
.chart { position: absolute; left: 387px; top: 54px; width: 575px; height: 358px; margin: 0; border: 1px solid #999; background: #fff; display: flex; flex-direction: column; align-items: center }
figcaption { margin-top: 15px; font: 16px/22px Lato, sans-serif; color: #757575 }
.chart svg { width: 292px; height: 292px; margin-top: 10px }
.vscroll { width: 14px; display: flex; flex-direction: column; padding-top: 31px }
.vthumb { width: 12px; height: 33px; margin: 0 1px auto; border-radius: 6px; background: #dadce0 }
.vscroll button { height: 19px; background: #f8f9fa; border-top: 1px solid #e1e1e1; border-left: 1px solid #e1e1e1 }
.tri { border: 4px solid transparent }
.up { border-top: 0; border-bottom-color: #8b8e91 }
.down { border-bottom: 0; border-top-color: #8b8e91 }
.left { border-left: 0; border-right-color: #8b8e91 }
.right { border-right: 0; border-left-color: #8b8e91 }
.hscroll { display: flex; height: 16px; border-bottom: 1px solid #d9dbde }
.hpad { width: 58px; background: #f8f9fa; border-right: 1px solid #c0c0c0 }
.htrack { flex: 1; padding: 1px 2px }
.hthumb { width: 89%; height: 12px; border-radius: 6px; background: #dadce0 }
.hscroll button { width: 19px; background: #f8f9fa; border-left: 1px solid #e1e1e1 }
.hend { width: 13px; background: #f8f9fa; border-left: 1px solid #c0c0c0 }

/* sheet tabs */
.sheets { display: flex; align-items: center; height: 46px; padding: 0 10px 0 51px; background: #f9fbfd; color: #444746 }
.sheet-btn { width: 50px; height: 46px }
.sheet-list { display: flex; margin-left: 15px }
.sheet { height: 46px; padding: 0 15px 0 16px; gap: 13px; font-size: 18px; font-weight: 500 }
.sheet.on { background: #e1e9f7; color: #0b57d0; font-weight: 600; height: 45px }
.side { width: 50px; height: 46px; margin-left: auto; padding-top: 8px }

/* taskbar */
.taskbar {
  position: relative; display: grid; grid-template-columns: 1fr auto 1fr; align-items: center; height: 60px;
  background: linear-gradient(90deg, #21020b, #24020b 30%, #3a0211 50%, #2c020c 68%, #21020b);
  color: #fff; font-family: "Open Sans", sans-serif;
}
.streaks { position: absolute; inset: 0; width: 100%; height: 100%; fill: none; stroke: #75568a; stroke-opacity: .45 }
.taskbar > div { position: relative; display: flex; align-items: center }
.widget { position: relative; margin-left: 28px; width: 28px; height: 44px; align-items: flex-end; padding-bottom: 9px }
.widget svg { width: 28px; height: 16px }
.widget span { position: absolute; top: 1px; right: -4px; width: 20px; height: 20px; border-radius: 50%; background: #ff8e9b; color: #1b0509; font-size: 13px; line-height: 19px }
.tb-center { gap: 5px }
.app-btn { position: relative; width: 50px; height: 50px; border-radius: 5px }
.app-btn > svg { width: 30px; height: 30px }
.g { fill: #fff; font: 700 13px "Open Sans", sans-serif; text-anchor: middle }
.tb-search { display: flex; align-items: center; width: 275px; height: 40px; margin-left: 2px; padding-left: 12px; gap: 10px; border: 1px solid #5c4046; border-radius: 20px; background: #3f252c }
.tb-search .ico { width: 24px; height: 24px }
.tb-search input { width: 200px; font-size: 16px }
.tb-search input::placeholder { color: #d6cbce; opacity: 1 }
.tile { background: #81454c }
.faint { background: #4a1824 }
.badge { position: absolute; top: 4px; right: 4px; width: 20px; height: 20px; border-radius: 50%; font-size: 12px; line-height: 19px; color: #fff }
.purple { background: #7b1fa2 }
.teal { background: #1d929c; top: 8px; width: 16px; height: 16px; font-size: 10px; line-height: 15px }
.ok { background: #17a349; border: 1px solid #222 }
.ok svg { display: block; width: 16px; height: 16px; margin: 1px }
.run { position: absolute; bottom: 1px; left: 21px; width: 8px; height: 4px; border-radius: 2px; background: #ff8e9b }
.long { left: 15px; width: 20px; background: #dccace }
.grey { background: #8d8184 }
.upwork { width: 30px; height: 30px; border-radius: 50%; background: #000; font: 700 18px/26px Lato, sans-serif }
.tb-right { justify-content: flex-end; padding-right: 14px; font-size: 14px }
.tb-right button { min-width: 40px; height: 50px }
.quick { gap: 9px; padding: 0 10px }
.tb-right .clock { flex-direction: column; align-items: flex-end; line-height: 20px; padding: 0 1px 0 15px }

.watermark {
  position: absolute; left: 50%; bottom: 20px; transform: translateX(-50%); width: 230px;
  display: flex; flex-direction: column; align-items: center; color: #b4b4b4; opacity: .48; pointer-events: none
}
.watermark b { font: 700 66px/62px "DejaVu Sans", sans-serif }
.watermark span { font: 600 37px/48px "Noto Sans", sans-serif }
</style>
